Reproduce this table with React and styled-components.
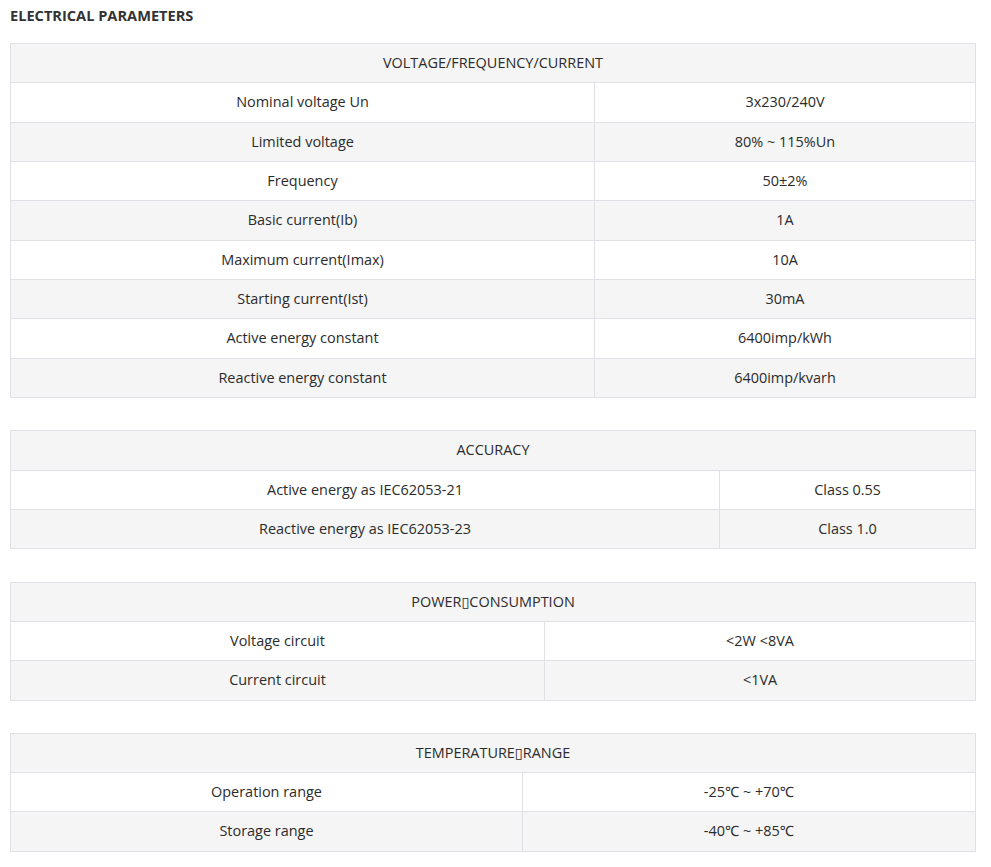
import React from "react";
import styled, { createGlobalStyle } from "styled-components";

const Global = createGlobalStyle`
  html, body { margin: 0; padding: 0; background: #fff; }
  body { font-family: "Open Sans", "Noto Sans", "DejaVu Sans", sans-serif; color: #333; }
`;

const Page = styled.div`
  padding: 5px 15px 20px 10px;
  display: flex;
  flex-direction: column;
  gap: 32.3px;
`;

const Title = styled.h3`
  margin: 0 0 -14.3px 0;
  font-size: 14.6px;
  font-weight: 700;
  line-height: 20px;
  color: #333;
`;

const Table = styled.table`
  width: 966px;
  border-collapse: collapse;
  table-layout: fixed;
  font-size: 14.45px;
  color: #2b2b2b;
`;

const Row = styled.tr`
  background: ${(p) => (p.$shade ? "#f5f5f5" : "#fff")};
`;

const Cell = styled.td`
  border: 1px solid #dfe1e6;
  padding: 9px 8px;
  line-height: 20.33px;
  text-align: center;
  white-space: nowrap;
`;

const sections = [
  {
    title: "VOLTAGE/FREQUENCY/CURRENT",
    left: 584,
    rows: [
      ["Nominal voltage Un", "3x230/240V"],
      ["Limited voltage", "80% ~ 115%Un"],
      ["Frequency", "50±2%"],
      ["Basic current(Ib)", "1A"],
      ["Maximum current(Imax)", "10A"],
      ["Starting current(Ist)", "30mA"],
      ["Active energy constant", "6400imp/kWh"],
      ["Reactive energy constant", "6400imp/kvarh"],
    ],
  },
  {
    title: "ACCURACY",
    left: 709,
    rows: [
      ["Active energy as IEC62053-21", "Class 0.5S"],
      ["Reactive energy as IEC62053-23", "Class 1.0"],
    ],
  },
  {
    title: "POWER\u25AFCONSUMPTION",
    left: 534,
    rows: [
      ["Voltage circuit", "<2W <8VA"],
      ["Current circuit", "<1VA"],
    ],
  },
  {
    title: "TEMPERATURE\u25AFRANGE",
    left: 512,
    rows: [
      ["Operation range", "-25℃ ~ +70℃"],
      ["Storage range", "-40℃ ~ +85℃"],
    ],
  },
];

function Section({ title, left, rows }) {
  return (
    <Table>
      <colgroup>
        <col style={{ width: left }} />
        <col />
      </colgroup>
      <tbody>
        <Row $shade>
          <Cell colSpan={2}>{title}</Cell>
        </Row>
        {rows.map(([a, b], i) => (
          <Row key={a} $shade={i % 2 === 1}>
            <Cell>{a}</Cell>
            <Cell>{b}</Cell>
          </Row>
        ))}
      </tbody>
    </Table>
  );
}

export default function App() {
  return (
    <>
      <Global />
      <Page>
        <Title>ELECTRICAL PARAMETERS</Title>
        {sections.map((s) => (
          <Section key={s.title} {...s} />
        ))}
      </Page>
    </>
  );
}
